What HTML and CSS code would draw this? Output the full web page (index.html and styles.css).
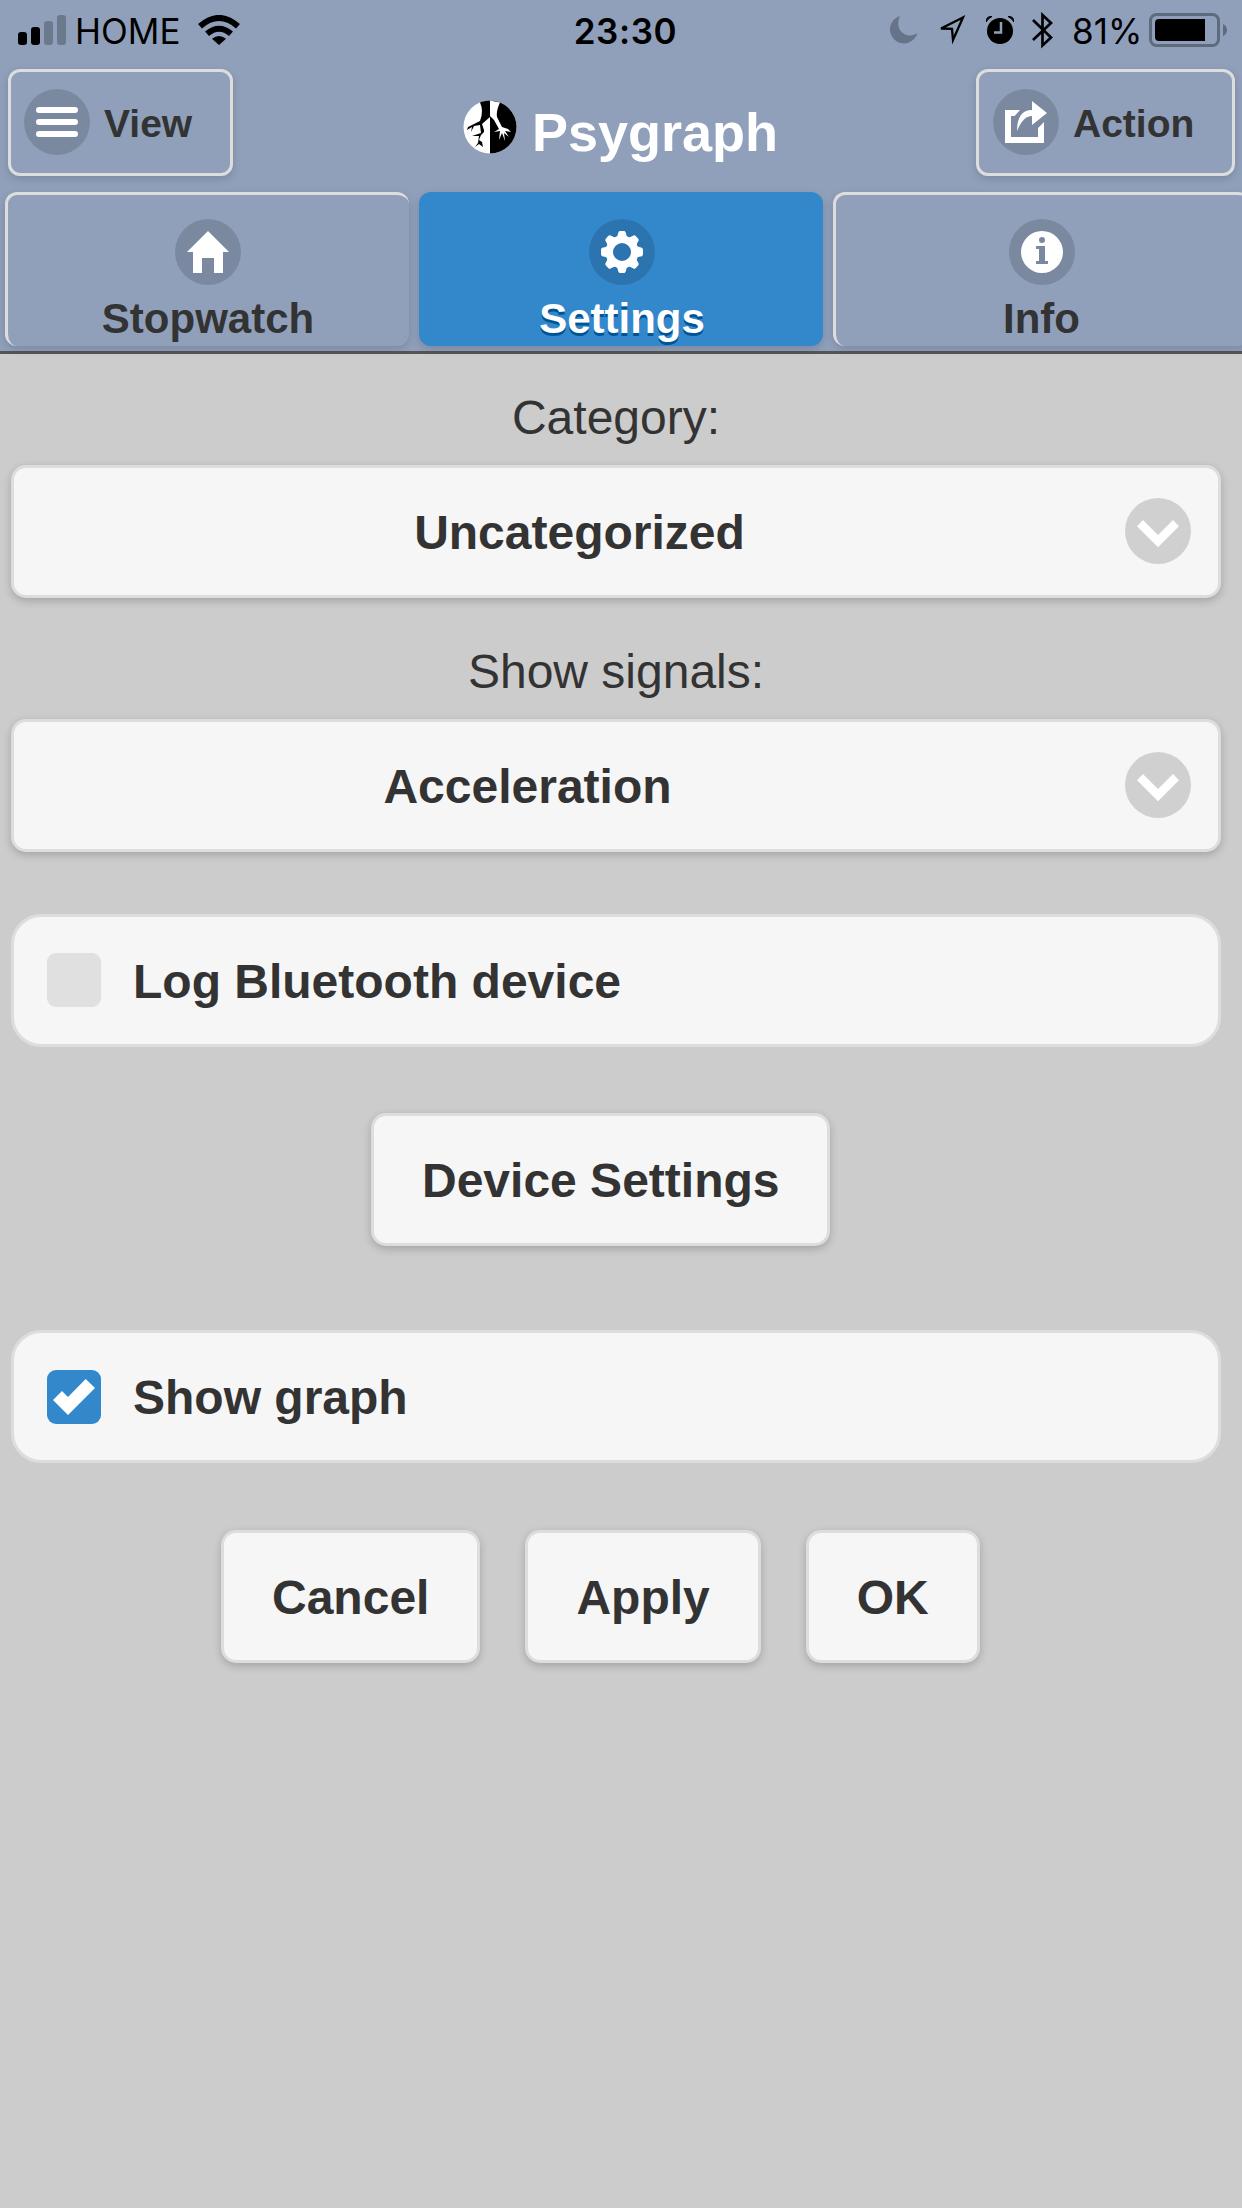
FILE: index.html
```html
<!DOCTYPE html>
<html lang="en">
<head>
<meta charset="utf-8">
<title>Psygraph</title>
<link rel="stylesheet" href="styles.css">
</head>
<body>
<header class="header">
  <div class="status">
    <div class="status-left">
      <svg width="48" height="30" viewBox="0 0 48 30"><rect y="17" width="9" height="13" rx="3"/><rect x="13" y="12" width="9" height="18" rx="3"/><g fill="#6c798d"><rect x="26" y="6" width="9" height="24" rx="3"/><rect x="39" width="9" height="30" rx="3"/></g></svg>
      <span class="carrier">HOME</span>
      <svg class="wifi" width="42" height="30" viewBox="0 0 42 30"><g fill="none" stroke="#000" stroke-width="6"><path d="M2 11.3Q21-5.300 40 11.300"/><path d="M9 18.800Q21 8.700 33 18.800"/></g><path d="M14 23.700Q21 18.500 28 23.700L21 30Z"/></svg>
    </div>
    <span class="clock">23:30</span>
    <div class="status-right">
      <svg class="moon" width="28" height="28" viewBox="0 0 28 28"><path fill="#667388" d="M10 0A14 14 0 1 0 27.500 17C18 24 3 15 10 0Z"/></svg>
      <svg class="arrow" width="30" height="30" viewBox="0 0 30 30"><path d="M5 13.500L27 2.500L17 25L16 13.800Z" fill="none" stroke="#000" stroke-width="2.300"/></svg>
      <svg class="alarm" width="28" height="28" viewBox="0 0 28 28"><circle cx="14" cy="15" r="13"/><path d="M0 6Q0 0 6 .5Q2.500 2 0 6ZM28 6Q28 0 22 .5Q25.500 2 28 6Z" stroke="#000"/><path d="M15 6v10.500H8" fill="none" stroke="#90a0bb" stroke-width="2.500"/></svg>
      <svg class="bt" width="22" height="37" viewBox="0 0 22 37"><path d="M1 8L19 25.500L10.500 33.500V3L19 11L1 28" fill="none" stroke="#000" stroke-width="2.700"/></svg>
      <span class="percent">81%</span>
      <svg class="battery" width="79" height="34" viewBox="0 0 79 34"><rect x="1.500" y="1.500" width="68" height="31" rx="6" fill="none" stroke="#5e6a7e" stroke-width="3"/><path d="M56 6V28H10Q6 28 6 24V10Q6 6 10 6Z"/><path d="M74 11Q78 13 78 17T74 23Z" fill="#5e6a7e"/></svg>
    </div>
  </div>
  <div class="titlebar">
    <button class="bar-btn view"><span class="disc"><svg class="glyph" viewBox="0 0 14 14"><path d="M1 2h12M1 6h12M1 10h12" stroke="#fff" stroke-width="2" stroke-linecap="round"/></svg></span><span class="text">View</span></button>
    <h1 class="title">
      <svg class="logo" width="54" height="54" viewBox="0 0 54 54"><circle cx="27" cy="27" r="26.500" fill="#fff"/><path d="M27 .5a26.500 26.500 0 0 1 0 53Z"/><path d="M17 2.500Q21 11 17 21L11 24L5 27L4 30L9 27L8 32L11 26L17 25L18 33L9 36L16 36L15 43L12 47L16 44L20 47L19 42L16 40L18 35L21 32L21 36L21 30L19 24L27 17V.5Q20 1 17 2.500Z"/><path fill="#fff" d="M27 .5L37 2.500Q33 11 34 17L39 27L45 29L48 32L42 31L46 37L41 33L42 41L39 33L36 40L37 31L31 32L36 29L31 20L27 16Z"/></svg>
      <span>Psygraph</span>
    </h1>
    <button class="bar-btn action"><span class="disc"><svg class="glyph" viewBox="0 0 14 14"><g fill="#fff"><path d="M9 0L14 4L9 8V5Q6 5 4 10Q4 3 9 3Z"/><path d="M0 3H5L3.200 5H2V12H11V9L13 7V14H0Z"/></g></svg></span><span class="text">Action</span></button>
  </div>
  <nav class="tabs">
    <a class="tab"><span class="disc"><svg class="glyph" viewBox="0 0 14 14"><path fill="#fff" d="M7 0L0 7H2V14H5V9H9V14H12V7H14Z"/></svg></span>Stopwatch</a>
    <a class="tab active"><span class="disc"><svg class="glyph" viewBox="0 0 14 14"><path fill="#fff" fill-rule="evenodd" d="M13.600 5.600L12.300 5.200Q11.900 5 12 4.200L12.600 3.100Q12.600 2.600 11.500 1.600Q11.200 1.300 10.800 1.500L9.800 2Q8.900 2.200 8.500 1.500L8.200.4Q8 0 7.700 0H6.300Q6 0 5.800.4L5.500 1.500Q5.100 2.200 4.200 2L3.200 1.500Q2.800 1.300 2.500 1.600Q1.400 2.600 1.400 3.100L2 4.200Q2.200 5 1.600 5.300L.4 5.600Q0 5.800 0 6.300V7.700Q0 8.200.4 8.400L1.600 8.700Q2.200 9 2 9.800L1.400 10.900Q1.400 11.400 2.500 12.400Q2.800 12.700 3.200 12.500L4.200 12Q5.100 11.800 5.500 12.500L5.800 13.600Q6 14 6.300 14H7.700Q8 14 8.200 13.600L8.500 12.500Q8.900 11.800 9.800 12L10.800 12.500Q11.200 12.700 11.500 12.400Q12.600 11.400 12.600 10.900L12 9.800Q11.800 9 12.400 8.700L13.600 8.400Q14 8.200 14 7.700V6.300Q14 5.800 13.600 5.600ZM7 4A3 3 0 1 1 7 10A3 3 0 1 1 7 4Z"/></svg></span>Settings</a>
    <a class="tab last"><span class="disc"><svg class="glyph" viewBox="0 0 14 14"><path fill="#fff" fill-rule="evenodd" d="M7 0A7 7 0 1 0 7 14A7 7 0 1 0 7 0ZM7 2A1 1 0 1 1 7 4A1 1 0 1 1 7 2ZM5 5H8V10H9V11H5V10H6V6H5Z"/></svg></span>Info</a>
  </nav>
</header>
<main class="content">
  <div class="label">Category:</div>
  <div class="select category"><span class="value">Uncategorized</span><span class="disc"><svg class="glyph" viewBox="0 0 14 14"><path fill="#fff" d="M12 3.300L7 8.300L2 3.300L0 5.400L7 12.400L14 5.400Z"/></svg></span></div>
  <div class="label">Show signals:</div>
  <div class="select signals"><span class="value">Acceleration</span><span class="disc"><svg class="glyph" viewBox="0 0 14 14"><path fill="#fff" d="M12 3.300L7 8.300L2 3.300L0 5.400L7 12.400L14 5.400Z"/></svg></span></div>
  <label class="check log"><span class="box"></span><span class="text">Log Bluetooth device</span></label>
  <div class="row device"><button class="btn">Device Settings</button></div>
  <label class="check graph"><span class="box on"><svg class="glyph" viewBox="0 0 14 14"><path fill="#fff" d="M10.900 1L5 7L3 5L0 8L5 13L14 4Z"/></svg></span><span class="text">Show graph</span></label>
  <div class="row actions"><button class="btn">Cancel</button><button class="btn">Apply</button><button class="btn">OK</button></div>
</main>
</body>
</html>
```
FILE: styles.css
```css
* { box-sizing: border-box; }
body {
  margin: 0;
  height: 2208px;
  overflow: hidden;
  background: #ccc;
  color: #333;
  font: 48px/63px "Liberation Sans", Arial, sans-serif;
}
svg { display: block; flex: none; }
button { font: inherit; color: inherit; margin: 0; }

.header {
  height: 354px;
  background: #90a0bb;
  border-bottom: 3px solid #555;
}
.status {
  height: 60px;
  display: grid;
  grid-template-columns: 1fr auto 1fr;
  color: #000;
  font: 35px/62px Inter, sans-serif;
}
.status-left, .status-right { display: flex; align-items: flex-start; }
.status-left { padding: 0 0 0 18px; }
.status-left svg { margin-top: 15px; }
.carrier { margin-left: 9px; width: 107px; white-space: nowrap; }
.status-left .wifi { margin-left: 16px; }
.clock { padding-left: 9px; font-weight: 600; letter-spacing: .6px; }
.status-right { justify-content: flex-end; padding-right: 14px; }
.moon { margin: 16px 18px 0 0; }
.arrow { margin: 15px 20px 0 0; }
.alarm { margin: 16px 18px 0 0; }
.bt { margin: 12px 18px 0 0; }
.percent { width: 70px; margin-right: 7px; }
.battery { margin-top: 13px; }

.titlebar {
  height: 132px;
  padding: 9px 7px 0 8px;
  display: flex;
  align-items: flex-start;
}
.bar-btn {
  height: 107px;
  display: flex;
  align-items: center;
  gap: 14px;
  padding: 0 0 0 13px;
  background: transparent;
  border: 3px solid #ddd;
  border-radius: 12px;
  box-shadow: 0 3px 9px rgba(0, 0, 0, .15);
  font-weight: 700;
  font-size: 39px;
}
.bar-btn .text { padding-top: 2px; }
.view { width: 225px; }
.action { width: 259px; padding-left: 14px; }
.disc {
  width: 66px;
  height: 66px;
  flex: none;
  display: flex;
  align-items: center;
  justify-content: center;
  border-radius: 50%;
  background: rgba(0, 0, 0, .14);
}
.bar-btn .disc { margin-bottom: 1px; }
.glyph { width: 42px; height: 42px; }
.view .glyph { margin-top: 6px; }
.title {
  flex: 1;
  margin: 31px 0 0 230px;
  display: flex;
  gap: 15px;
  color: #fff;
  font-size: 54px;
  line-height: 65px;
}

.tabs { display: flex; gap: 10px; padding-left: 5px; }
.tab {
  flex: none;
  width: 404px;
  height: 154px;
  padding: 24px 1px 0 0;
  display: flex;
  flex-direction: column;
  align-items: center;
  gap: 6px;
  border: 0 solid #ddd;
  border-width: 3px 0 0 3px;
  border-radius: 12px;
  box-shadow: 0 3px 9px rgba(0, 0, 0, .15);
  font-size: 42px;
  line-height: 55px;
  font-weight: 700;
}
.active {
  background: #38c;
  border-color: #38c;
  color: #fff;
  text-shadow: 0 3px 0 #059;
}
.last { width: 417px; padding-right: 3px; }

.content { padding: 22px 21px 0 11px; }
.label { height: 89px; padding-top: 10px; text-align: center; color: #333; }
.select, .btn {
  height: 133px;
  border: 3px solid #ddd;
  border-radius: 15px;
  background: #f6f6f6;
  box-shadow: 0 3px 9px rgba(0, 0, 0, .2);
  font-weight: 700;
}
.select { display: flex; align-items: center; padding-right: 27px; margin-bottom: 32px; }
.value { flex: 1; padding-top: 2px; text-align: center; }
.select .disc { background: #d0d0d0; margin-bottom: 1px; }
.category .value { padding-left: 20px; }
.signals .value { padding-right: 84px; }
.check {
  height: 133px;
  display: flex;
  align-items: center;
  gap: 32px;
  padding-left: 33px;
  border: 3px solid #ddd;
  border-radius: 30px;
  background: #f6f6f6;
  font-weight: 700;
}
.check .text { padding-top: 1px; }
.log { margin-top: 62px; }
.box {
  width: 54px;
  height: 54px;
  margin-bottom: 1px;
  display: flex;
  align-items: center;
  justify-content: center;
  border-radius: 9px;
  background: #e0e0e0;
}
.on { background: #38c; margin: 1px 0 0; }
.row { display: flex; }
.device { padding: 66px 0 84px 360px; }
.actions { gap: 45px; padding: 67px 0 0 210px; }
.btn { padding: 1px 48px 0; }
```
